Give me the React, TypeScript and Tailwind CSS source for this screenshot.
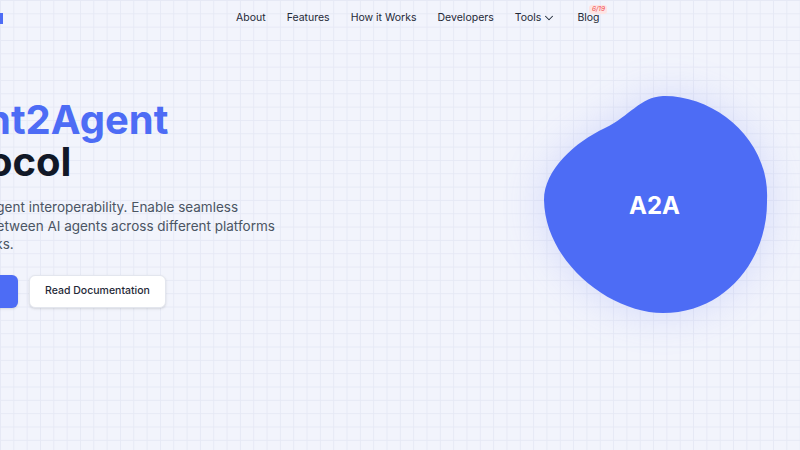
import { ChevronDown } from 'lucide-react'

const blob =
  'M663 96 C715 95 770 140 767 200 C768 260 725 313 663 313 C610 313 545 262 544 200 C544 170 575 142 605 128 C630 116 640 97 663 96 Z'

function Header() {
  return (
    <header className="flex h-[36px] items-center">
      <div className="h-[11px] w-[3px] bg-[#4d6cf5]" />
      <nav className="ml-[233px] flex items-center gap-[21px] text-[10.5px] leading-[14px] text-[#1f2937]">
        <a>About</a>
        <a>Features</a>
        <a>How it Works</a>
        <a>Developers</a>
        <a className="flex items-center gap-[1px]">
          Tools <ChevronDown size={14} strokeWidth={1.75} />
        </a>
        <a className="relative">
          Blog
          <span className="absolute left-[12px] top-[-6px] rounded-[3px] bg-[#fde4e4] px-[2.5px] text-[6.5px] italic leading-[9px] text-[#ef4444]">
            6/19
          </span>
        </a>
      </nav>
    </header>
  )
}

function Hero() {
  return (
    <section className="flex items-start">
      <div className="-ml-[92px] w-[612px] shrink-0 pt-[63px]">
        <h1 className="text-[40px] font-bold leading-[42px]">
          <span className="text-[#4d6cf5]">Agent2Agent</span>
          <br />
          <span className="text-[#111827]">Protocol</span>
        </h1>
        <div className="ml-[9px]">
          <p className="mt-[15px] text-[13.5px] leading-[18.5px] text-[#4b5563]">
            Advancing agent interoperability. Enable seamless
            <br />
            interaction between AI agents across different platforms
            <br />
            or frameworks.
          </p>
          <div className="mt-[21px] flex gap-[11px]">
            <button className="h-[33px] w-[101px] rounded-[6px] bg-[#4d6cf5] text-[10.5px] font-medium text-white shadow-sm">
              Get Started
            </button>
            <button className="h-[33px] w-[137px] rounded-[6px] border border-[#e3e6ee] bg-white text-[10.5px] font-medium text-[#1f2937] shadow-sm">
              Read Documentation
            </button>
          </div>
        </div>
      </div>
      <div className="relative pt-[34px]">
        <svg width="270" height="270" viewBox="520 70 270 270" className="overflow-visible">
          <defs>
            <filter id="glow" x="-50%" y="-50%" width="200%" height="200%">
              <feGaussianBlur stdDeviation="22" />
            </filter>
          </defs>
          <path d={blob} fill="#7d8cf2" opacity="0.28" filter="url(#glow)" />
          <path d={blob} fill="#4d6cf5" />
        </svg>
        <span className="absolute left-[109px] top-[155px] text-[24px] font-bold leading-[30px] text-white">
          A2A
        </span>
      </div>
    </section>
  )
}

export default function App() {
  return (
    <div
      className="relative h-[450px] w-[800px] overflow-hidden bg-[#f2f4fc] bg-[image:linear-gradient(to_right,#e6e9f5_1px,transparent_1px),linear-gradient(to_bottom,#e6e9f5_1px,transparent_1px)] bg-[size:13.33px_13.33px]"
      style={{ fontFamily: 'Inter, "Noto Sans", sans-serif' }}
    >
      <Header />
      <Hero />
    </div>
  )
}
